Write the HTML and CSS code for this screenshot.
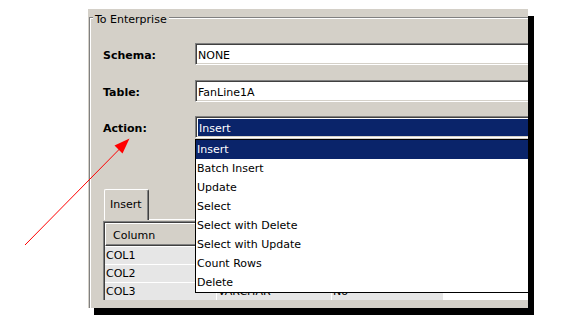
FILE: index.html
```html
<!DOCTYPE html>
<html>
<head>
<meta charset="utf-8">
<link rel="stylesheet" href="styles.css">
</head>
<body>
<div class="window">
  <fieldset class="group">
    <legend>To Enterprise</legend>
    <div class="form">
      <label class="lbl">Schema:</label>
      <div class="field">NONE</div>
      <label class="lbl">Table:</label>
      <div class="field">FanLine1A</div>
      <label class="lbl">Action:</label>
      <div class="field combo"><span class="sel">Insert</span></div>
    </div>
    <div class="tabs">
      <div class="tab">Insert</div>
      <div class="tabfill"></div>
    </div>
    <div class="grid">
      <div class="hc">Column</div><div class="hc"></div><div class="hc"></div>
      <div class="cell">COL1</div><div class="cell"></div><div class="cell"></div>
      <div class="cell">COL2</div><div class="cell"></div><div class="cell"></div>
      <div class="cell">COL3</div><div class="cell">VARCHAR</div><div class="cell">No</div>
    </div>
  </fieldset>
  <ul class="list">
    <li class="on">Insert</li>
    <li>Batch Insert</li>
    <li>Update</li>
    <li>Select</li>
    <li>Select with Delete</li>
    <li>Select with Update</li>
    <li>Count Rows</li>
    <li>Delete</li>
  </ul>
</div>
<svg class="arrow" width="561" height="328" viewBox="0 0 561 328">
  <line x1="25" y1="245" x2="121" y2="147.5" stroke="#ff0000" stroke-width="1"/>
  <polygon points="129.5,138.5 114.5,145.5 122.5,153.5" fill="#ff0000"/>
</svg>
</body>
</html>
```
FILE: styles.css
```css
* { box-sizing: border-box; }
html, body { margin: 0; background: #fff; }
body {
  position: relative;
  width: 561px;
  height: 328px;
  overflow: hidden;
  padding: 9px 0 0 88px;
  font-family: "DejaVu Sans", Verdana, sans-serif;
  font-size: 11px;
  color: #000;
}
.window {
  position: relative;
  width: 440px;
  height: 299px;
  background: #d4d0c8;
  box-shadow: 6px 7px 0 #000;
  overflow: hidden;
  padding-left: 1px;
}
.group {
  margin: 0;
  width: 520px;
  height: 420px;
  min-width: 0;
  border: 1px solid #808080;
  box-shadow: inset 1px 1px 0 #fff, 1px 1px 0 #fff;
  padding: 0 0 0 3px;
}
.group legend {
  padding: 4px 2px 0;
  line-height: 13px;
  background: #d4d0c8;
}
.form {
  display: grid;
  grid-template-columns: 92px 340px;
  grid-auto-rows: 22px;
  row-gap: 14.5px;
  margin: 17px 0 0 10px;
}
.lbl {
  font-weight: bold;
  align-self: center;
  padding-top: 3px;
}
.field {
  background: #fff;
  border-top: 1px solid #808080;
  border-left: 1px solid #808080;
  border-bottom: 1px solid #fff;
  border-right: 1px solid #fff;
  box-shadow: inset 1px 1px 0 #404040, inset -1px -1px 0 #d4d0c8;
  padding: 3px 0 0 2px;
  line-height: 17px;
  white-space: nowrap;
}
.combo { padding: 2px 1px 0 2px; }
.sel {
  display: block;
  background: #0a246a;
  color: #fff;
  height: 17px;
  line-height: 19px;
  padding-left: 1px;
}
.tabs {
  display: flex;
  margin: 51px 0 0 10px;
  height: 31px;
}
.tab {
  margin-left: 1px;
  height: 31px;
  padding: 0 6px 0 5px;
  line-height: 30px;
  border-top: 1px solid #fff;
  border-left: 1px solid #fff;
  border-right: 1px solid #404040;
  border-radius: 2px 2px 0 0;
  box-shadow: inset -1px 0 0 #808080;
}
.tabfill {
  flex: 1;
  border-bottom: 1px solid #fff;
}
.grid {
  display: grid;
  grid-template-columns: 111px 114px 111px;
  grid-template-rows: 23px;
  grid-auto-rows: 17px;
  gap: 1px;
  margin: 1px 0 0 10px;
  width: 440px;
  background: #fff;
  border-top: 1px solid #808080;
  border-left: 1px solid #808080;
  box-shadow: inset 1px 1px 0 #404040;
  padding: 1px 0 0 1px;
}
.hc {
  background: #d4d0c8;
  border-top: 1px solid #fff;
  border-left: 1px solid #fff;
  border-right: 1px solid #404040;
  border-bottom: 1px solid #404040;
  box-shadow: inset -1px -1px 0 #808080;
  padding: 2px 0 0 7px;
  line-height: 19px;
}
.cell {
  background: #e6e6e6;
  padding-left: 1px;
  line-height: 18px;
  white-space: nowrap;
}
.list {
  position: absolute;
  left: 107px;
  top: 130px;
  width: 440px;
  height: 154px;
  margin: 0;
  padding: 0;
  list-style: none;
  background: #fff;
  border: 1px solid #000;
}
.list li {
  height: 19px;
  padding: 1px 0 0 1px;
  line-height: 18px;
  white-space: nowrap;
}
.list li.on {
  background: #0a246a;
  color: #fff;
}
.arrow {
  position: absolute;
  left: 0;
  top: 0;
  pointer-events: none;
}
```
